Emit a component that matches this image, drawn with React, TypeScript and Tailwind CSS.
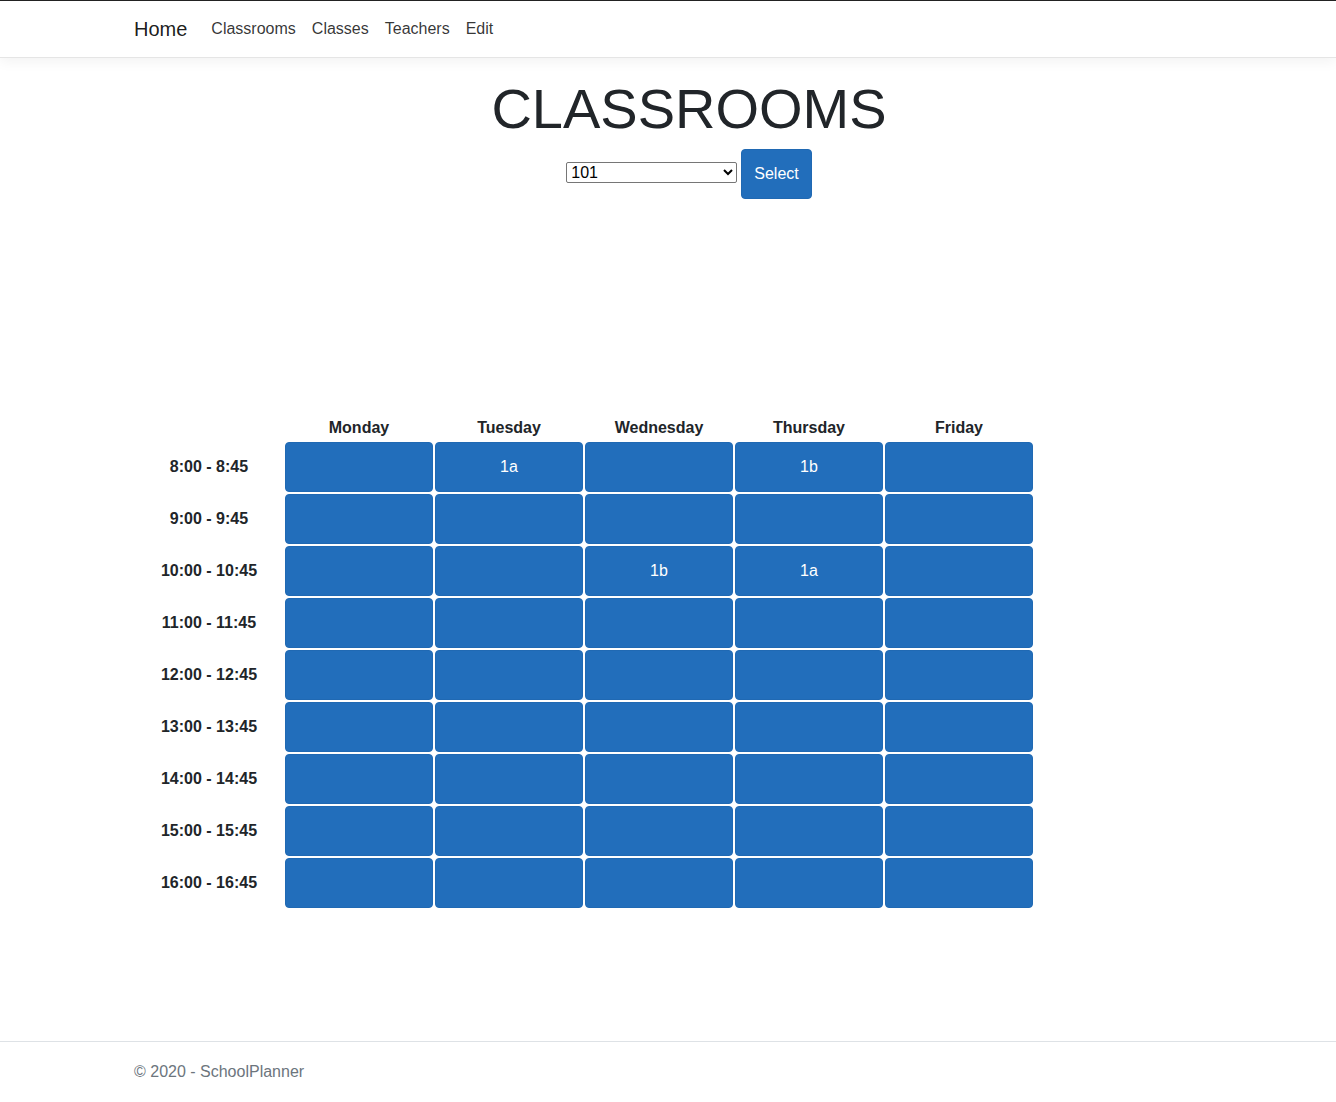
import React from 'react';

const days = ['Monday', 'Tuesday', 'Wednesday', 'Thursday', 'Friday'];

const slots = [
  '8:00 - 8:45',
  '9:00 - 9:45',
  '10:00 - 10:45',
  '11:00 - 11:45',
  '12:00 - 12:45',
  '13:00 - 13:45',
  '14:00 - 14:45',
  '15:00 - 15:45',
  '16:00 - 16:45',
];

// lessons keyed by "row-day"
const lessons: Record<string, string> = {
  '0-1': '1a',
  '0-3': '1b',
  '2-2': '1b',
  '2-3': '1a',
};

const App = () => {
  return (
    <div
      className="min-h-screen flex flex-col bg-white text-[#212529]"
      style={{ fontFamily: '"Liberation Sans", Arial, sans-serif' }}
    >
      <nav className="border-t border-[#222] border-b border-b-[#e5e5e5] bg-white shadow-[0_4px_12px_rgba(0,0,0,0.05)] py-2">
        <div className="pl-[134px] flex items-center h-10">
          <a className="text-[20px] leading-[30px] text-black/90 mr-4">Home</a>
          <div className="flex text-base text-black/80">
            <a className="px-2">Classrooms</a>
            <a className="px-2">Classes</a>
            <a className="px-2">Teachers</a>
            <a className="px-2">Edit</a>
          </div>
        </div>
      </nav>

      <main className="flex-1 pl-[134px]">
        <div className="w-[1110px]">
          <h1 className="mt-[17px] text-center text-[56px] leading-[1.2] font-normal">CLASSROOMS</h1>
          <div className="mt-[7px] flex justify-center items-center gap-1">
            <select className="w-[171px] h-[21px] border border-[#767676] rounded-[2px] bg-white text-base leading-none pl-0 mt-[-3px] text-black">
              <option>101</option>
              <option>102</option>
              <option>103</option>
            </select>
            <button className="h-[50px] px-3 rounded bg-[#226ebb] border border-[#2069b3] text-white text-base">
              Select
            </button>
          </div>

          <div className="mt-[217px] pl-px">
            <div className="grid grid-cols-[148px_repeat(5,148px)] gap-[2px]">
              <div />
              {days.map((d) => (
                <div key={d} className="h-6 leading-6 text-center font-bold">
                  {d}
                </div>
              ))}
              {slots.map((s, r) => (
                <React.Fragment key={s}>
                  <div className="h-[50px] flex items-center justify-center font-bold">{s}</div>
                  {days.map((d, c) => (
                    <div
                      key={d}
                      className="h-[50px] rounded bg-[#226ebb] border border-[#2069b3] flex items-center justify-center text-white"
                    >
                      {lessons[`${r}-${c}`] ?? ''}
                    </div>
                  ))}
                </React.Fragment>
              ))}
            </div>
          </div>
        </div>
      </main>

      <footer className="border-t border-[#dee2e6] h-[61px] flex items-center pl-[134px] text-[#6c757d]">
        © 2020 - SchoolPlanner
      </footer>
    </div>
  );
};

export default App;
